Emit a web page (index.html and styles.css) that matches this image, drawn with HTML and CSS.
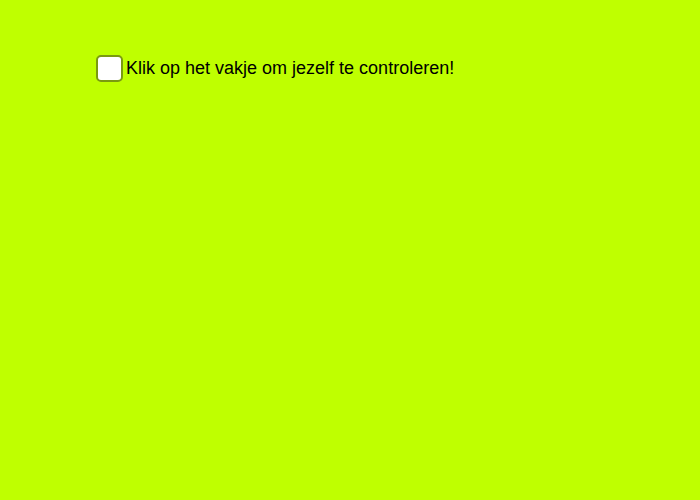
FILE: index.html
```html
<!DOCTYPE html>
<html>
<head>
<meta charset="utf-8">
<link rel="stylesheet" href="styles.css">
</head>
<body>
<div class="page">
  <label class="check">
    <span class="box"></span>
    <span class="label">Klik op het vakje om jezelf te controleren!</span>
  </label>
</div>
</body>
</html>
```
FILE: styles.css
```css
html, body {
  margin: 0;
  padding: 0;
  background: #bfff00;
  width: 100%;
  height: 100%;
}
.page {
  padding: 55px 0 0 96px;
  font-family: "Liberation Sans", Arial, sans-serif;
}
.check {
  display: flex;
  align-items: center;
  gap: 3px;
}
.box {
  width: 23px;
  height: 23px;
  border: 2px solid #7a9a10;
  border-radius: 5px;
  background: #fff;
  flex: none;
}
.label {
  font-size: 18px;
  color: #000;
}
```
